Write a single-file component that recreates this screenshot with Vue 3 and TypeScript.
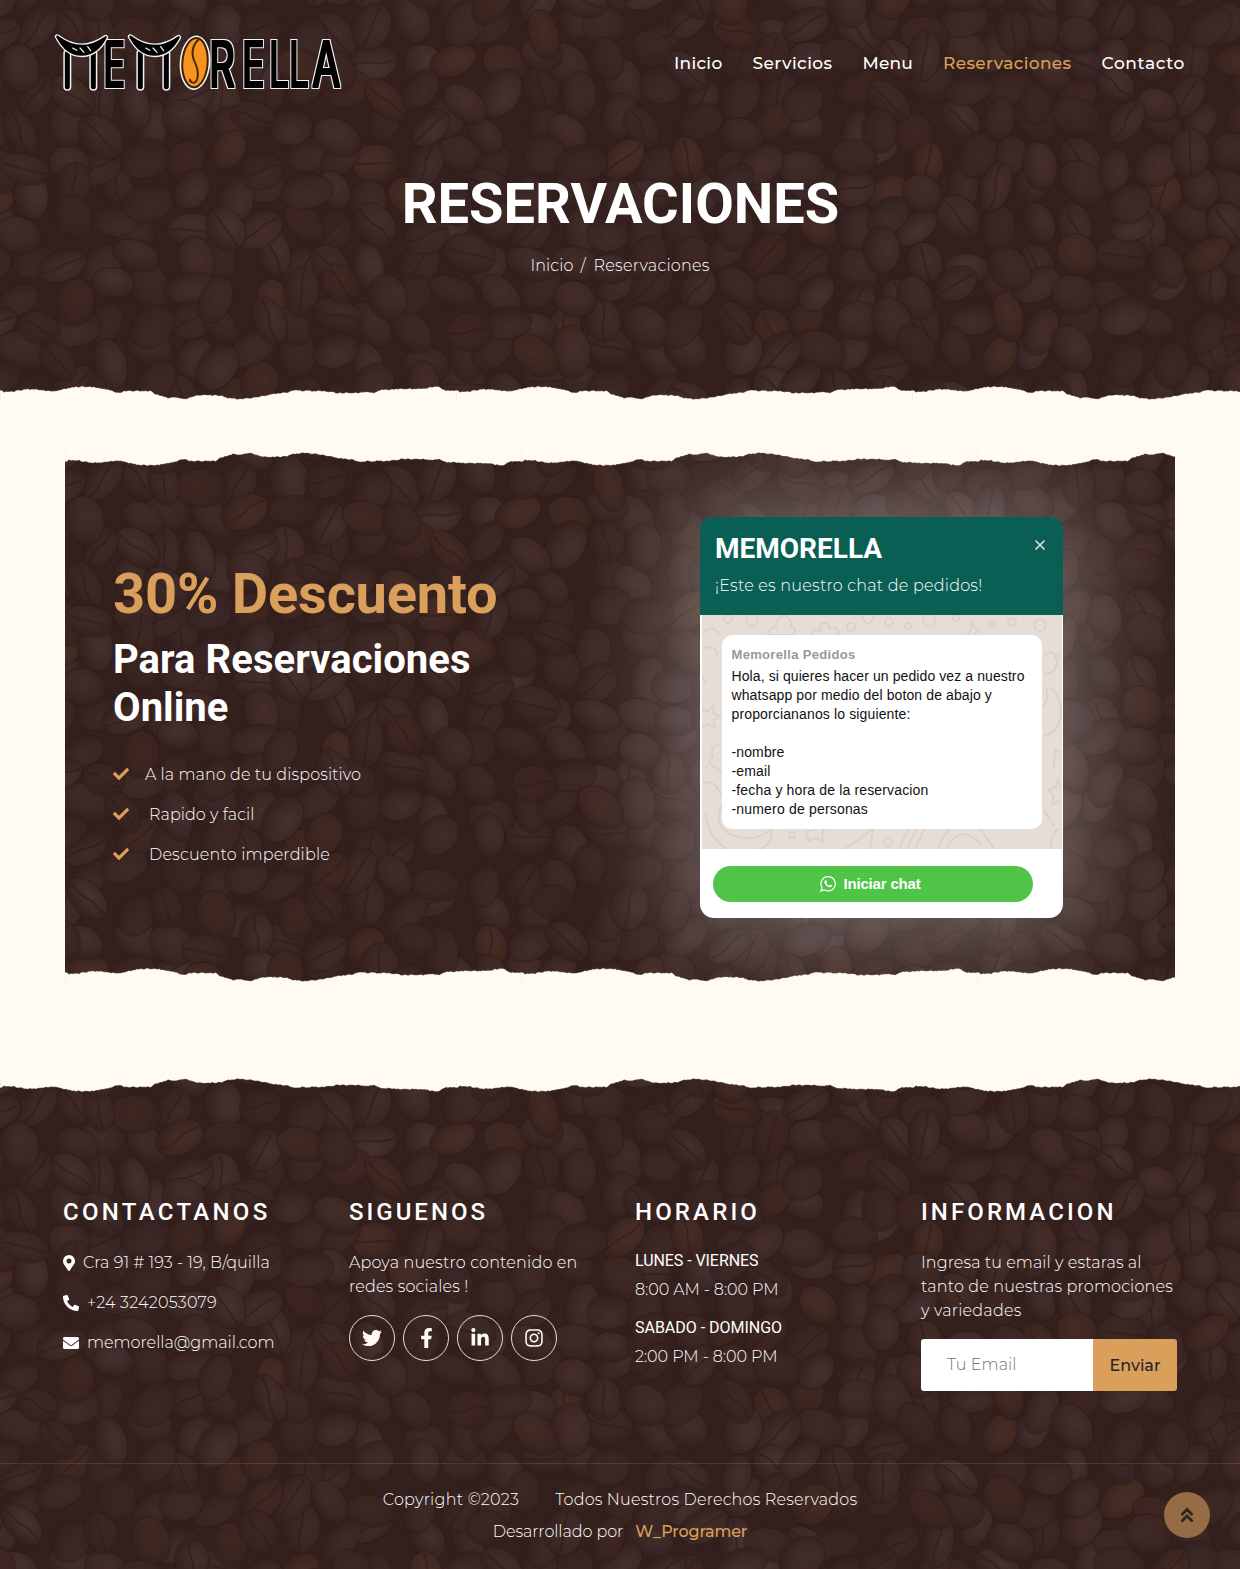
<script setup lang="ts">
interface Bean {
  x: number
  y: number
  rx: number
  ry: number
  angle: number
  fill: string
  crease: string
  opacity: number
}

function seeded(seed: number): () => number {
  let s = seed
  return () => {
    s = (s * 1664525 + 1013904223) % 4294967296
    return s / 4294967296
  }
}

function makeBeans(): Bean[] {
  const rnd = seeded(71)
  const list: Bean[] = []
  for (let y = -5; y < 550; y += 33) {
    for (let x = -10; x < 1265; x += 39) {
      const rx = 20 + rnd() * 6
      const ry = 14 + rnd() * 5
      const bend = (rnd() - 0.5) * 9
      const warm = rnd()
      list.push({
        x: x + (rnd() - 0.5) * 24,
        y: y + (rnd() - 0.5) * 22,
        rx,
        ry,
        angle: rnd() * 180,
        fill: warm > 0.86 ? 'url(#bean-warm)' : warm > 0.4 ? 'url(#bean-mid)' : 'url(#bean-cool)',
        crease: rnd() > 0.65 ? `M${-rx + 3} ${bend / 2}Q${-rx / 3} ${bend} 0 0T${rx - 3} ${-bend / 2}` : '',
        opacity: 0.5 + rnd() * 0.5,
      })
    }
  }
  return list
    .map((bean) => ({ bean, key: rnd() }))
    .sort((a, b) => a.key - b.key)
    .map((e) => e.bean)
}
const beans = makeBeans()

const profile: [number, number][] = [
  [0, 5.7], [5, 7.3], [14, 6.7], [24, 4.5], [40, 4.9], [51, 6.7], [63, 4.7], [70, 2.7], [83, 1.7], [99, 2.7],
  [118, 8], [126, 6], [150, 6.3], [158, 10], [169, 13.7], [176, 12.3], [184, 14.7], [190, 12.3], [200, 10.3],
  [221, 10.7], [227, 13], [240, 14.5], [257, 12.3], [273, 9.3], [289, 7.3], [295, 5.7], [324, 6.3], [336, 8],
  [360, 8.3], [366, 7], [374, 8.3], [382, 5], [399, 4.3], [421, 4], [436, 1.7], [447, 5.7], [456, 5.7],
]
function tornPath(): string {
  const rnd = seeded(9)
  let d = 'M0 16'
  let i = 0
  for (let x = 0; x <= 456; x += 2) {
    while (i < profile.length - 2 && x > profile[i + 1][0]) i++
    const [x0, y0] = profile[i]
    const [x1, y1] = profile[i + 1]
    const y = y0 + ((y1 - y0) * (x - x0)) / (x1 - x0) + (rnd() - 0.5) * 1.2
    d += `L${x} ${y.toFixed(2)}`
  }
  return d + 'V16Z'
}
const torn = tornPath()
const tiles = [0, 456, 912]

// Tracks a label out to the given width through its letter spacing.
const vFit = {
  mounted(el: HTMLElement, binding: { value: number }) {
    const n = (el.textContent ?? '').length
    const w = el.getBoundingClientRect().width
    el.style.letterSpacing = `${((binding.value - w) / n).toFixed(3)}px`
  },
}

const nav = [
  { label: 'Inicio', w: 48.5, active: false },
  { label: 'Servicios', w: 80, active: false },
  { label: 'Menu', w: 50.5, active: false },
  { label: 'Reservaciones', w: 128.5, active: true },
  { label: 'Contacto', w: 83.5, active: false },
]
const perks = [
  { label: 'A la mano de tu dispositivo', w: 216, indent: false },
  { label: 'Rapido y facil', w: 105.5, indent: true },
  { label: 'Descuento imperdible', w: 181, indent: true },
]
const message = [
  { t: 'Hola, si quieres hacer un pedido vez a nuestro', w: 293 },
  { t: 'whatsapp por medio del boton de abajo y', w: 260.5 },
  { t: 'proporciananos lo siguiente:', w: 179 },
  { t: '', w: 0 },
  { t: '-nombre', w: 53 },
  { t: '-email', w: 39 },
  { t: '-fecha y hora de la reservacion', w: 197 },
  { t: '-numero de personas', w: 136.5 },
]
const contacts = [
  {
    t: 'Cra 91 # 193 - 19, B/quilla', w: 187, vb: '0 0 384 512', iw: 12,
    d: 'M172 502C27 291 0 270 0 192a192 192 0 1 1 384 0c0 78-27 99-172 310-10 13-30 13-40 0zM192 272a80 80 0 1 0 0-160 80 80 0 0 0 0 160z',
  },
  {
    t: '+24 3242053079', w: 130, vb: '0 0 512 512', iw: 16, flip: true,
    d: 'M493 24.600l-104-24c-11-2.600-23 3.300-27 13.600l-48 112c-4 10-1.400 21 7 28l60.600 49.600c-36 77-99 141-178 178l-49.600-60.600c-7-8.500-18-11-28-7l-112 48C3 367-2.600 379 0 390l24 104C26.600 505 36 512 48 512c256 0 464-207 464-464 0-11-7.700-21-19-23.400z',
  },
  {
    t: 'memorella@gmail.com', w: 187.5, vb: '0 0 512 512', iw: 16,
    d: 'M502 191c4-3 10 0 10 5v204c0 26-22 48-48 48H48c-26 0-48-22-48-48V196c0-5 6-8 10-5 22 17 52 39 155 114 21 15 57 48 91 48 34 0 71-33 91-48 103-75 133-97 155-114zM256 320c23 0 57-29 73-41C462 182 472 174 503 150c6-4 9-11 9-19v-19c0-26-22-48-48-48H48c-26 0-48 22-48 48v19c0 8 3 14 9 19 31 24 41 32 174 129 16 12 50 41 73 41z',
  },
]
const socials = [
  {
    name: 'Twitter', vb: '0 0 512 512', w: 20,
    d: 'M459.370 151.716c.325 4.548.325 9.097.325 13.645 0 138.720-105.583 298.558-298.558 298.558-59.452 0-114.680-17.219-161.137-47.106 8.447.974 16.568 1.299 25.340 1.299 49.055 0 94.213-16.568 130.274-44.832-46.132-.975-84.792-31.188-98.112-72.772 6.498.974 12.995 1.624 19.818 1.624 9.421 0 18.843-1.300 27.614-3.573-48.081-9.747-84.143-51.980-84.143-102.985v-1.299c13.969 7.797 30.214 12.670 47.431 13.319-28.264-18.843-46.781-51.005-46.781-87.391 0-19.492 5.197-37.360 14.294-52.954 51.655 63.675 129.300 105.258 216.365 109.807-1.624-7.797-2.599-15.918-2.599-24.040 0-57.828 46.782-104.934 104.934-104.934 30.213 0 57.502 12.670 76.670 33.137 23.715-4.548 46.456-13.320 66.599-25.340-7.798 24.366-24.366 44.833-46.132 57.827 21.117-2.273 41.584-8.122 60.426-16.243-14.292 20.791-32.161 39.308-52.628 54.253z',
  },
  {
    name: 'Facebook', vb: '0 0 320 512', w: 13,
    d: 'M279.140 288l14.220-92.660h-88.910v-60.130c0-25.350 12.420-50.060 52.240-50.060h40.420V6.260S260.430 0 225.360 0c-73.220 0-121.080 44.380-121.080 124.720v70.620H22.890V288h81.390v224h100.170V288z',
  },
  {
    name: 'LinkedIn', vb: '0 0 448 512', w: 18,
    d: 'M100.280 448H7.400V148.900h92.880zM53.790 108.100C24.090 108.100 0 83.500 0 53.800a53.790 53.790 0 0 1 107.580 0c0 29.700-24.100 54.300-53.790 54.300zM447.900 448h-92.680V302.400c0-34.700-.7-79.200-48.290-79.200-48.290 0-55.690 37.700-55.690 76.700V448h-92.780V148.900h89.080v40.800h1.300c12.400-23.500 42.690-48.300 87.880-48.300 94 0 111.280 61.900 111.280 142.300V448z',
  },
  {
    name: 'Instagram', vb: '0 0 448 512', w: 18,
    d: 'M224.100 141c-63.600 0-114.900 51.300-114.900 114.900s51.300 114.900 114.900 114.900S339 319.500 339 255.900 287.700 141 224.100 141zm0 189.600c-41.100 0-74.700-33.500-74.700-74.700s33.500-74.700 74.700-74.700 74.700 33.500 74.700 74.700-33.600 74.700-74.700 74.700zm146.400-194.300c0 14.900-12 26.800-26.800 26.800-14.900 0-26.800-12-26.800-26.800s12-26.800 26.800-26.800 26.800 12 26.800 26.800zm76.100 27.200c-1.700-35.900-9.900-67.700-36.200-93.900-26.200-26.200-58-34.400-93.900-36.200-37-2.100-147.900-2.100-184.900 0-35.800 1.700-67.600 9.900-93.900 36.100s-34.400 58-36.200 93.900c-2.100 37-2.100 147.900 0 184.900 1.700 35.900 9.900 67.700 36.200 93.900s58 34.400 93.900 36.200c37 2.100 147.900 2.100 184.900 0 35.900-1.700 67.700-9.900 93.900-36.200 26.200-26.200 34.400-58 36.200-93.900 2.100-37 2.100-147.800 0-184.800zM398.800 388c-7.800 19.600-22.900 34.700-42.600 42.600-29.500 11.700-99.500 9-132.100 9s-102.700 2.600-132.100-9c-19.600-7.800-34.700-22.900-42.600-42.600-11.700-29.500-9-99.500-9-132.100s-2.600-102.700 9-132.100c7.800-19.600 22.900-34.700 42.600-42.600 29.500-11.700 99.500-9 132.100-9s102.700-2.600 132.100 9c19.600 7.800 34.700 22.900 42.600 42.600 11.700 29.500 9 99.500 9 132.100s2.700 102.700-9 132.100z',
  },
]
const info = [
  { t: 'Ingresa tu email y estaras al', w: 220.5 },
  { t: 'tanto de nuestras promociones', w: 252 },
  { t: 'y variedades', w: 100.5 },
]
</script>

<template>
  <div class="page">
    <svg class="defs" width="0" height="0" aria-hidden="true">
      <defs>
        <radialGradient id="bean-mid" cx=".45" cy=".4" r=".6">
          <stop offset="0" stop-color="#462f2a" /><stop offset=".6" stop-color="#3f2925" /><stop offset="1" stop-color="#34211e" />
        </radialGradient>
        <radialGradient id="bean-cool" cx=".5" cy=".35" r=".65">
          <stop offset="0" stop-color="#463231" /><stop offset=".55" stop-color="#3e2a28" /><stop offset="1" stop-color="#33211e" />
        </radialGradient>
        <radialGradient id="bean-warm" cx=".4" cy=".45" r=".6">
          <stop offset="0" stop-color="#492e26" /><stop offset=".65" stop-color="#412922" /><stop offset="1" stop-color="#35211c" />
        </radialGradient>
        <symbol id="beans" viewBox="0 0 1240 530">
          <rect width="1240" height="530" fill="#33201d" />
          <g v-for="(b, i) in beans" :key="i" :transform="`translate(${b.x} ${b.y}) rotate(${b.angle})`">
            <ellipse :rx="b.rx + 1.5" :ry="b.ry + 1.5" fill="#301d1a" opacity=".6" />
            <ellipse :rx="b.rx" :ry="b.ry" :fill="b.fill" :opacity="b.opacity" />
            <path v-if="b.crease" :d="b.crease" fill="none" stroke="#2f1d1a" stroke-width="2" stroke-linecap="round" opacity=".65" />
          </g>
        </symbol>
        <symbol id="torn" viewBox="0 0 1368 15">
          <g v-for="t in tiles" :key="t" :transform="`translate(${t} 0)`">
            <path :d="torn" fill="#fffbf2" stroke="#fffbf2" stroke-width=".3" />
            <rect x="0" y="6" width="1" height="9" fill="#f3f0ea" />
          </g>
        </symbol>
      </defs>
    </svg>

    <header class="hero">
      <svg class="beans"><use href="#beans" width="1240" height="530" /></svg>
      <div class="bar">
        <svg class="logo" viewBox="0 0 960 270" role="img" aria-label="Memorella">
          <defs>
            <filter id="outline" x="-5%" y="-10%" width="110%" height="120%" color-interpolation-filters="sRGB">
              <feMorphology in="SourceAlpha" operator="dilate" radius="3" result="bold" />
              <feMorphology in="SourceAlpha" operator="dilate" radius="6" result="wide" />
              <feFlood flood-color="#f4f1ef" /><feComposite in2="wide" operator="in" result="white" />
              <feFlood flood-color="#000" /><feComposite in2="bold" operator="in" result="black" />
              <feMerge><feMergeNode in="white" /><feMergeNode in="black" /></feMerge>
            </filter>
          </defs>
          <g filter="url(#outline)" class="letters">
            <text transform="translate(190 200) scale(.58 1)">E</text>
            <text transform="translate(507 200) scale(.64 1)">R</text>
            <text transform="translate(606 200) scale(.6 1)">E</text>
            <text transform="translate(688 200) scale(.55 1)">L</text>
            <text transform="translate(748 200) scale(.55 1)">L</text>
            <text transform="translate(817 200) scale(.65 1)">A</text>
          </g>
          <g v-for="m in [0, 219]" :key="m" :transform="`translate(${m} 0)`" stroke-linecap="round" stroke-linejoin="round">
            <path d="M82 100V200M160 100V200" stroke="#f4f1ef" stroke-width="24" />
            <path d="M82 100V200M160 100V200" stroke="#000" stroke-width="15" />
            <path d="M52 50Q90 78 125 78Q160 78 197 52Q170 104 125 104Q80 104 52 50Z" stroke="#f4f1ef" stroke-width="15" />
            <path d="M52 50Q90 78 125 78Q160 78 197 52Q170 104 125 104Q80 104 52 50Z" stroke="#000" stroke-width="7" />
            <path d="M98 84L110 91M120 84L132 97M143 80L152 92" fill="none" stroke="#fff" stroke-width="3.500" />
          </g>
          <ellipse cx="465" cy="128" rx="46" ry="82" fill="#f4f1ef" transform="rotate(4 465 128)" />
          <ellipse cx="465" cy="128" rx="38" ry="74" fill="#f7941d" stroke="#3a210b" stroke-width="6" transform="rotate(4 465 128)" />
          <path d="M478 56C450 82 455 108 466 130C478 155 476 195 456 187Q449 184 450 179" fill="none" stroke="#4a2a0c" stroke-width="6" stroke-linecap="round" />
        </svg>
        <nav class="nav">
          <a v-for="n in nav" :key="n.label" :class="{ active: n.active }"><span v-fit="n.w">{{ n.label }}</span></a>
        </nav>
      </div>
      <h1 class="title">RESERVACIONES</h1>
      <p class="crumbs"><span v-fit="43">Inicio</span><span class="slash">/</span><span v-fit="116">Reservaciones</span></p>
      <svg class="edge edge-bottom"><use href="#torn" width="1368" height="15" /></svg>
    </header>

    <section class="offer">
      <svg class="beans"><use href="#beans" width="1240" height="530" /></svg>
      <div class="pitch">
        <h2 class="discount"><span v-fit="384.500">30% Descuento</span></h2>
        <h3 class="subtitle"><span v-fit="357.500">Para Reservaciones</span> <span v-fit="115.500">Online</span></h3>
        <ul class="perks">
          <li v-for="p in perks" :key="p.label">
            <svg class="check" viewBox="0 0 512 512"><path d="M173.898 439.404L7.500 273c-10-10-10-26 0-36l36-36c10-10 26-10 36 0L192 312.690 432.095 72.596c10-10 26-10 36 0l36.203 36.204c10 10 10 26 0 36L210.100 439.400c-10 10-26 10-36.202.004z" /></svg>
            <span v-fit="p.w" :class="{ indent: p.indent }">{{ p.label }}</span>
          </li>
        </ul>
      </div>
      <div class="chat">
        <div class="chat-head">
          <div class="chat-row">
            <h3>MEMORELLA</h3>
            <svg class="close" viewBox="0 0 12 12"><path d="M1.500 1.500l9 9M10.500 1.500l-9 9" /></svg>
          </div>
          <p><span v-fit="267.500">¡Este es nuestro chat de pedidos!</span></p>
        </div>
        <div class="chat-body">
          <svg class="doodles" viewBox="0 0 360 234">
            <circle cx="26" cy="4" r="4" /><circle cx="50" cy="5" r="6" /><circle cx="166" cy="3" r="5" /><circle cx="149" cy="12" r="4" />
            <circle cx="187" cy="7" r="4" /><circle cx="227" cy="5" r="6" /><circle cx="206" cy="11" r="3" /><circle cx="254" cy="3" r="3" />
            <circle cx="290" cy="9" r="3" /><circle cx="310" cy="7" r="4" /><circle cx="338" cy="10" r="6" /><circle cx="355" cy="41" r="2" />
            <path d="M66 20q0-7 8-8q-1-9 8-12q8 3 7 12q6 1 3 8zM0 18q10-9 17 1M110 20l3-6 5 2 1-8h7l2 6 6-2 3 5-4 5M266 20q4-5 4-14q3 10 8 9q-5 2-5 5" />
            <path d="M2 33q14-3 13 9M4 68l-4-6M0 94l6 3 5-7 1 9 6 2-6 4 1 8-7-4-6 3M18 130q-11 0-7 11q-8 8 5 13l4 4M6 153l-3 0M1 168q12-4 18 12M3 198q4 30 28 38M20 190q-9 18 6 28q24 12 44-4M70 214q0 18-14 20" />
            <path d="M343 40q10-8 12 8q-2 12-12 10M347 72q12 8 12 28q-4 20-18 20M341 92q8-12 2-20M353 134l-1 20M353 134l5 4M346 175l8-3 2-8 3 8M346 175l6 5-2 10 8-5M342 195l10 16M357 213q-10 8-8 21" />
            <circle cx="90" cy="220" r="3" /><path d="M104 217l8-2-2-8 6 6 7-1-3 7 1 8-7-4-7 3zM143 234l28-20-3 20M205 234l18-39M213 234l18-39M197 234l18-39M236 234q15-40 44-18l12 18M245 234q12-27 34-5M304 196q0 14 18 14q12-1 12-14M312 199q8 6 14-3" />
            <circle cx="186" cy="227" r="4" />
          </svg>
          <div class="bubble">
            <strong><span v-fit="124">Memorella Pedidos</span></strong>
            <p v-for="(m, i) in message" :key="i"><span v-if="m.t" v-fit="m.w">{{ m.t }}</span></p>
          </div>
        </div>
        <div class="chat-foot">
          <button class="start">
            <svg viewBox="0 0 90 90"><path d="M90 43.841c0 24.213-19.779 43.841-44.182 43.841a44.256 44.256 0 0 1-21.357-5.455L0 90l7.975-23.522a43.380 43.380 0 0 1-6.340-22.637C1.635 19.628 21.416 0 45.818 0 70.223 0 90 19.628 90 43.841zM45.818 6.982c-20.484 0-37.146 16.535-37.146 36.859 0 8.065 2.629 15.534 7.076 21.610L11.107 79.140l14.275-4.537A37.122 37.122 0 0 0 45.819 80.700c20.481 0 37.146-16.533 37.146-36.857S66.301 6.982 45.818 6.982zm22.311 46.956c-.273-.447-.994-.717-2.076-1.254-1.084-.537-6.410-3.138-7.400-3.495-.993-.358-1.717-.538-2.438.537-.721 1.076-2.797 3.495-3.430 4.212-.632.719-1.263.809-2.347.271-1.082-.537-4.571-1.673-8.708-5.333-3.219-2.848-5.393-6.364-6.025-7.441-.631-1.075-.066-1.656.475-2.191.488-.482 1.084-1.255 1.625-1.882.543-.628.723-1.075 1.082-1.793.363-.717.182-1.344-.09-1.883-.270-.537-2.438-5.825-3.340-7.977-.902-2.150-1.803-1.792-2.436-1.792-.631 0-1.354-.090-2.076-.090s-1.896.269-2.889 1.344c-.992 1.076-3.789 3.676-3.789 8.963 0 5.288 3.879 10.397 4.422 11.113.541.716 7.490 11.920 18.500 16.223C58.200 64.771 58.200 63.336 60.186 63.156c1.984-.179 6.406-2.599 7.312-5.107.900-2.512.900-4.663.631-5.111z" /></svg>
            <span v-fit="77">Iniciar chat</span>
          </button>
        </div>
      </div>
      <svg class="edge edge-top"><use href="#torn" width="1368" height="15" /></svg>
      <svg class="edge edge-bottom"><use href="#torn" width="1368" height="15" /></svg>
    </section>

    <footer class="footer">
      <svg class="beans"><use href="#beans" width="1240" height="530" /></svg>
      <svg class="edge edge-top"><use href="#torn" width="1368" height="15" /></svg>
      <div class="columns">
        <div>
          <h4><span v-fit="207.500">CONTACTANOS</span></h4>
          <p v-for="c in contacts" :key="c.t" class="contact">
            <svg :class="{ flip: c.flip }" :viewBox="c.vb" :width="c.iw" height="16"><path :d="c.d" fill-rule="evenodd" /></svg><span v-fit="c.w">{{ c.t }}</span>
          </p>
        </div>
        <div>
          <h4><span v-fit="139">SIGUENOS</span></h4>
          <p><span v-fit="228.500">Apoya nuestro contenido en</span></p>
          <p><span v-fit="119.500">redes sociales !</span></p>
          <div class="socials">
            <a v-for="s in socials" :key="s.name" :aria-label="s.name"><svg :viewBox="s.vb" :width="s.w" height="20"><path :d="s.d" /></svg></a>
          </div>
        </div>
        <div class="hours">
          <h4><span v-fit="125">HORARIO</span></h4>
          <h6><span v-fit="123.500">LUNES - VIERNES</span></h6>
          <p><span v-fit="143.500">8:00 AM - 8:00 PM</span></p>
          <h6><span v-fit="147">SABADO - DOMINGO</span></h6>
          <p><span v-fit="142.500">2:00 PM - 8:00 PM</span></p>
        </div>
        <div>
          <h4><span v-fit="195.500">INFORMACION</span></h4>
          <p v-for="l in info" :key="l.t"><span v-fit="l.w">{{ l.t }}</span></p>
          <div class="subscribe">
            <div class="field"><span v-fit="69.500">Tu Email</span></div>
            <button><span v-fit="51">Enviar</span></button>
          </div>
        </div>
      </div>
      <div class="legal">
        <p><span v-fit="136.500">Copyright ©2023</span><span v-fit="302" class="rights">Todos Nuestros Derechos Reservados</span></p>
        <p><span v-fit="130.500">Desarrollado por</span><a><span v-fit="112">W_Programer</span></a></p>
      </div>
      <a class="to-top" aria-label="Subir"><svg viewBox="0 0 16 18"><path d="M2.500 9L8 3.500 13.500 9M2.500 15.500L8 10l5.500 5.500" /></svg></a>
    </footer>
  </div>
</template>

<style>
html,
body {
  margin: 0;
  background: #fffbf2;
}
</style>

<style scoped>
.page {
  width: 1240px;
  height: 1569px;
  overflow: hidden;
  background: #fffbf2;
  color: #fff;
  font: 300 16px/24px Montserrat, Inter, sans-serif;
}
.defs { position: absolute; }
h1, h2, h3, h4, h6, p, ul { margin: 0; padding: 0; }
h1, h2, h3, h4, h6 { font-family: Roboto, sans-serif; }
span { display: inline-block; white-space: nowrap; }
button { border: 0; padding: 0; }

.beans {
  position: absolute;
  top: 0;
  left: 0;
  width: 1240px;
  height: 530px;
  z-index: -1;
}
.hero, .offer, .footer {
  position: relative;
  z-index: 0;
  overflow: hidden;
  box-sizing: border-box;
}
.edge {
  position: absolute;
  left: 0;
  width: 1368px;
  height: 15px;
}
.edge-top { top: 0; transform: scaleY(-1); }
.edge-bottom { bottom: 0; }

.hero { height: 400px; }
.bar {
  display: flex;
  justify-content: space-between;
  padding: 20px 55px 0 40px;
}
.logo { width: 320px; height: 90px; }
.letters { font: 400 188px Inter, sans-serif; }
.nav {
  display: flex;
  gap: 30px;
  padding-top: 31px;
  font-size: 17px;
  font-weight: 500;
}
.nav .active { color: #da9f5b; }
.title {
  margin-top: 61px;
  padding-left: 1px;
  text-align: center;
  font-size: 56px;
  font-weight: 700;
  line-height: 67px;
}
.crumbs {
  display: flex;
  justify-content: center;
  margin-top: 16px;
}
.slash { padding: 0 8px 0 7px; }

.offer {
  display: flex;
  width: 1110px;
  height: 530px;
  margin: 52px 65px 0;
}
.pitch {
  width: 635px;
  padding: 109px 0 0 48px;
  box-sizing: border-box;
}
.discount {
  color: #da9f5b;
  font-size: 56px;
  font-weight: 700;
  line-height: 67px;
}
.subtitle {
  width: 380px;
  margin-top: 8px;
  font-size: 40px;
  font-weight: 700;
  line-height: 48px;
}
.subtitle span, .discount span { display: block; width: max-content; }
.perks {
  margin-top: 31px;
  list-style: none;
}
.perks li {
  display: flex;
  align-items: center;
  height: 24px;
  margin-bottom: 16px;
}
.check {
  width: 16px;
  height: 16px;
  margin: -2px 16px 0 0;
  fill: #da9f5b;
}
.indent { margin-left: 4px; }

.chat {
  display: flex;
  flex-direction: column;
  width: 363px;
  height: 401px;
  margin-top: 65px;
  border-radius: 14px;
  background: #fff;
  box-shadow: 0 0 110px 18px rgba(255, 255, 255, 0.33);
}
.chat-head {
  height: 98px;
  padding: 15px 18px 0 15px;
  box-sizing: border-box;
  border-radius: 12px 12px 0 0;
  background: #0a5f54;
}
.chat-row {
  display: flex;
  justify-content: space-between;
}
.chat-row h3 {
  font-size: 28px;
  font-weight: 700;
  line-height: 34px;
}
.close {
  width: 12px;
  height: 12px;
  margin: 7px -1px 0 0;
  fill: none;
  stroke: #d6e5e2;
  stroke-width: 1.6;
}
.chat-head p { margin-top: 8px; }
.chat-body {
  position: relative;
  width: 360px;
  height: 234px;
  padding: 20px;
  margin-left: 2px;
  box-sizing: border-box;
  background: #e5ddd6;
}
.doodles {
  position: absolute;
  inset: 0;
  fill: none;
  stroke: #dad0c8;
  stroke-width: 1.7;
}
.bubble {
  position: relative;
  height: 194px;
  padding: 10px 9.5px;
  box-sizing: border-box;
  border-radius: 10px;
  background: #fff;
  color: #111;
  font: 400 14px/19px "Liberation Sans", sans-serif;
}
.bubble strong {
  display: block;
  margin-bottom: 3px;
  color: #999;
  font-size: 13px;
}
.bubble p { height: 19px; }
.chat-foot { padding: 17px 0 0 13px; }
.start {
  display: flex;
  align-items: center;
  justify-content: center;
  gap: 8px;
  width: 320px;
  height: 36px;
  padding-right: 6px;
  border-radius: 18px;
  background: #4fc447;
  color: #fff;
  font: 700 15px/20px "Liberation Sans", sans-serif;
}
.start svg { width: 16px; height: 16px; fill: #fff; }

.footer {
  height: 491px;
  margin-top: 96px;
}
.columns {
  display: grid;
  grid-template-columns: 286px 286px 286px 256px;
  height: 385px;
  padding: 119px 0 0 63px;
  box-sizing: border-box;
}
h4 {
  margin-bottom: 24px;
  font-size: 24px;
  font-weight: 500;
  line-height: 30px;
}
.contact {
  display: flex;
  align-items: center;
  gap: 8px;
  margin-bottom: 16px;
}
.contact svg { margin-top: -1px; fill: #fff; }
.flip { transform: scaleX(-1); }
.socials {
  display: flex;
  gap: 8px;
  margin-top: 16px;
}
.socials a {
  display: flex;
  align-items: center;
  justify-content: center;
  width: 46px;
  height: 46px;
  box-sizing: border-box;
  border: 1px solid #e8ded2;
  border-radius: 50%;
}
.socials svg { fill: #fffbf2; }
h6 {
  font-size: 16px;
  font-weight: 400;
  line-height: 19px;
}
.hours p { margin: 8px 0 16px; }
.subscribe {
  display: flex;
  height: 52px;
  margin-top: 16px;
  border-radius: 3px;
  overflow: hidden;
}
.field {
  width: 146px;
  padding-left: 26px;
  background: #fff;
  color: #6c757d;
  line-height: 51px;
}
.subscribe button {
  flex: 1;
  background: #da9f5b;
  color: #212529;
  font: 500 16px Montserrat, Inter, sans-serif;
}
.legal {
  padding-top: 20px;
  border-top: 1px solid rgba(255, 255, 255, 0.1);
}
.legal p {
  display: flex;
  justify-content: center;
  height: 24px;
  margin: 4px 0 8px;
}
.rights { margin-left: 36px; }
.legal a {
  margin-left: 12px;
  color: #da9f5b;
  font-weight: 500;
}
.to-top {
  position: absolute;
  right: 30px;
  bottom: 31px;
  display: flex;
  align-items: center;
  justify-content: center;
  width: 46px;
  height: 46px;
  border-radius: 50%;
  background: #966c44;
}
.to-top svg {
  width: 16px;
  height: 18px;
  fill: none;
  stroke: #2c2522;
  stroke-width: 2.8;
}
</style>
